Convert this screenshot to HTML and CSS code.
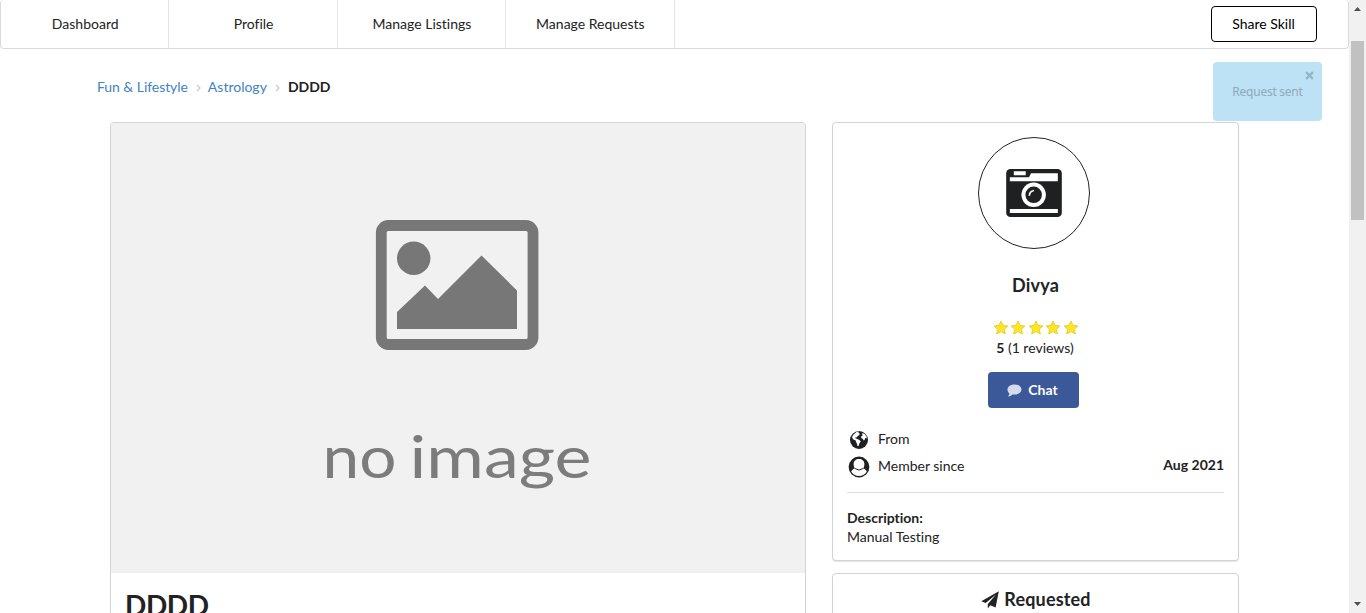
FILE: index.html
```html
<!DOCTYPE html>
<html lang="en">
<head>
<meta charset="utf-8">
<title>DDDD</title>
<link rel="stylesheet" href="styles.css">
</head>
<body>
<div class="page">
  <nav class="menu">
    <a class="item">Dashboard</a>
    <a class="item">Profile</a>
    <a class="item">Manage Listings</a>
    <a class="item">Manage Requests</a>
    <a class="share">Share Skill</a>
  </nav>
  <div class="crumbs">
    <a>Fun &amp; Lifestyle</a>
    <svg class="chev" viewBox="0 0 5 8"><path d="M1 1l3 3-3 3"/></svg>
    <a>Astrology</a>
    <svg class="chev" viewBox="0 0 5 8"><path d="M1 1l3 3-3 3"/></svg>
    <b>DDDD</b>
  </div>
  <main class="columns">
    <section class="card listing">
      <svg class="cover" viewBox="111 123 694 450">
        <rect x="381.3" y="225.5" width="151.7" height="119" rx="7" fill="none" stroke="#777" stroke-width="10.8"/>
        <circle cx="413.7" cy="258.3" r="16.7"/>
        <path d="M397 329v-17l28-26.5 13 13.500 43.500-43.500 35.500 35V329z"/>
        <text x="322.500" y="477.500" textLength="74" lengthAdjust="spacingAndGlyphs">no</text>
        <text x="409.500" y="477.500" textLength="182" lengthAdjust="spacingAndGlyphs">image</text>
      </svg>
      <h1 class="title">DDDD</h1>
    </section>
    <aside class="side">
      <section class="card profile">
        <div class="avatar">
          <svg viewBox="138 131 168 145" width="56" height="48">
            <rect x="138" y="131" width="168" height="145" rx="13" fill="#1f2021"/>
            <path d="M161 138h36v12h-36zM149 156h58l6-12h81v24H149zM149 252h145v12H149z" fill="#fff"/>
            <circle cx="221" cy="209" r="37" fill="#fff"/>
            <circle cx="221" cy="209" r="25" fill="#1f2021"/>
            <path d="M208 212q0-14 14-16" fill="none" stroke="#fff" stroke-width="5"/>
          </svg>
        </div>
        <h2 class="name">Divya</h2>
        <div class="stars">
          <svg viewBox="0 0 16 15"><path d="M8 1l2 4.400 4.900.6-3.600 3.300 1 4.700L8 11.600 3.700 14l1-4.700L1.100 6 6 5.400z"/></svg>
          <svg viewBox="0 0 16 15"><path d="M8 1l2 4.400 4.900.6-3.600 3.300 1 4.700L8 11.600 3.700 14l1-4.700L1.100 6 6 5.400z"/></svg>
          <svg viewBox="0 0 16 15"><path d="M8 1l2 4.400 4.900.6-3.600 3.300 1 4.700L8 11.600 3.700 14l1-4.700L1.100 6 6 5.400z"/></svg>
          <svg viewBox="0 0 16 15"><path d="M8 1l2 4.400 4.900.6-3.600 3.300 1 4.700L8 11.600 3.700 14l1-4.700L1.100 6 6 5.400z"/></svg>
          <svg viewBox="0 0 16 15"><path d="M8 1l2 4.400 4.900.6-3.600 3.300 1 4.700L8 11.600 3.700 14l1-4.700L1.100 6 6 5.400z"/></svg>
        </div>
        <div class="reviews"><b>5</b> (1 reviews)</div>
        <a class="chat">
          <svg viewBox="0 0 15 13" width="15" height="13"><path d="M7.500.5C11.600.5 14.500 2.700 14.500 5.600s-2.900 5-7 5c-.7 0-1.400-.1-2-.2C4.300 11.600 2.700 12.300 1 12.400c.8-.8 1.300-1.700 1.400-2.900C1.200 8.600.5 7.200.5 5.600.5 2.700 3.400.5 7.500.5z"/></svg>
          <span>Chat</span>
        </a>
        <div class="facts">
          <div class="fact">
            <svg viewBox="0 0 22 22" width="22" height="22"><circle cx="11" cy="11" r="9" fill="#1f2021"/><path d="M5.500 5.500l3-2.500 2.500-.4-.7 1.500 1.500.5-.5 1.500-1.500.8-1.300 1.500-1.400.2.600 1 1.600.4 2.200 1 1.200 1.400-1.400 2-.6 2.400-1.200.4-.5-2.500-1.100-2-.2-1.300L5 10.200 4 8zM14.500 4l2.500 1.200 1.600 2.500.2 1.600-1.500-.2-.8 1.800-.9.500-.8-1.700-1.500-.5-.2-1.700 1.500-1.100-.5-1z" fill="#fff"/></svg>
            <span>From</span>
          </div>
          <div class="fact">
            <svg viewBox="0 0 22 22" width="22" height="22"><circle cx="11" cy="11" r="10.400" fill="#1f2021"/><path d="M3.200 15.500c.8-1.800 2.300-2.500 3.900-2.900C6 11.400 5.600 9.800 5.600 8c0-3 2.200-5 5.400-5s5.400 2 5.400 5c0 1.800-.4 3.400-1.500 4.600 1.600.4 3.100 1.100 3.900 2.900C17.200 18.300 14.400 20 11 20s-6.200-1.700-7.800-4.500z" fill="#fff"/><path d="M7.100 12.600q3.900 2.900 7.800 0" fill="none" stroke="#1f2021"/></svg>
            <span>Member since</span><b>Aug 2021</b>
          </div>
        </div>
        <div class="description"><b>Description:</b><br>Manual Testing</div>
      </section>
      <section class="card requested">
        <svg viewBox="0 0 18 18" width="18" height="18"><path d="M17.800.3L.3 10.200l4.400 1.900L15 3.500 6.800 13v4.600l2.500-3.300 5.300 2.200z"/></svg>
        <span>Requested</span>
      </section>
    </aside>
  </main>
</div>
<div class="scrollbar">
  <svg viewBox="0 0 7 4"><path d="M0 4l3.500-4L7 4z"/></svg>
  <div class="thumb"></div>
  <svg viewBox="0 0 7 4"><path d="M0 0h7L3.500 4z"/></svg>
</div>
<div class="toast"><svg viewBox="0 0 8 8"><path d="M1 1l6 6M7 1L1 7"/></svg><span>Request sent</span></div>
</body>
</html>
```
FILE: styles.css
```css
* { box-sizing: border-box; }
body {
  margin: 0;
  height: 613px;
  overflow: hidden;
  display: flex;
  background: #fff;
  color: #212223;
  font: 14px/20px Lato, sans-serif;
  font-variant-ligatures: none;
}
svg { display: block; flex: none; }
.page { width: 1349px; height: 613px; overflow: hidden; }
.menu {
  display: flex;
  height: 49px;
  border: 1px solid #d9dadb;
  border-top: 0;
  border-radius: 4px;
}
.item {
  width: 168.400px;
  padding-left: 1px;
  border-right: 1px solid #e3e4e4;
  text-align: center;
  line-height: 48px;
}
.share {
  margin: 6px 31px 0 auto;
  width: 106px;
  height: 36px;
  padding-right: 1px;
  border: 1px solid #000;
  border-radius: 4px;
  color: #000;
  text-align: center;
  line-height: 34px;
}
.crumbs {
  display: flex;
  align-items: center;
  padding: 28px 0 0 97px;
  height: 48px;
}
.crumbs a { color: #4183c4; }
.crumbs a:first-child { letter-spacing: -0.06px; }
.crumbs b { margin-left: 1px; }
.chev { width: 5px; height: 8px; margin: 2px 7px 0 8px; fill: none; stroke: #c9c9c9; stroke-width: 1.2; }
.columns { display: flex; gap: 26px; padding: 25px 0 0 110px; }
.card {
  background: #fff;
  border: 1px solid #d4d4d5;
  border-radius: 4px;
  box-shadow: 0 1px 1px #e4e4e5;
}
.listing { width: 696px; height: 560px; overflow: hidden; }
.cover { width: 694px; height: 450px; background: #f1f1f1; fill: #777; }
.cover text { font: 59px Lato, sans-serif; fill: #7c7c7c; }
.title { margin: 14px 14px 0; font-size: 28px; line-height: 36px; font-weight: 700; letter-spacing: -0.400px; }
.side { width: 407px; display: flex; flex-direction: column; gap: 12px; }
.profile {
  height: 439px;
  padding: 14px 14px 0;
  display: flex;
  flex-direction: column;
  align-items: center;
}
.avatar {
  width: 112px;
  height: 112px;
  margin-right: 4px;
  border: 1px solid #222;
  border-radius: 50%;
  display: grid;
  place-items: center;
}
.name { margin: 24px 0 0; font-size: 18px; line-height: 24px; letter-spacing: 0.2px; }
.stars { display: flex; gap: 1.500px; margin-top: 23px; }
.stars svg { width: 16px; height: 15px; fill: #ffe623; stroke: #e6d033; stroke-width: 1; stroke-linejoin: round; }
.reviews { margin-top: 3px; padding-right: 1px; line-height: 20px; }
.chat {
  display: flex;
  align-items: center;
  justify-content: center;
  gap: 6px;
  width: 91px;
  height: 36px;
  margin: 14px 4px 0 0;
  padding-right: 2px;
  border-radius: 4px;
  background: #3b5998;
  color: #fff;
  font-weight: 700;
}
.chat svg { fill: #d5dbea; }
.facts {
  width: 100%;
  height: 85px;
  padding-top: 21px;
  border-bottom: 1px solid #dcdddd;
}
.fact { display: flex; height: 27px; padding-left: 1px; }
.fact span { margin-left: 8px; }
.fact b { margin-left: auto; margin-top: -1px; }
.description { width: 100%; margin-top: 15px; line-height: 19px; }
.requested {
  height: 60px;
  padding: 13px 0 0 1px;
  display: flex;
  justify-content: center;
  gap: 5px;
  font-size: 18px;
  line-height: 24px;
  font-weight: 700;
}
.requested span { letter-spacing: 0.150px; }
.requested svg { margin-top: 4px; fill: #212223; }
.scrollbar {
  width: 17px;
  height: 613px;
  padding: 7px 0;
  background: #f1f1f1;
  display: flex;
  flex-direction: column;
  align-items: center;
}
.scrollbar svg { width: 7px; height: 4px; fill: #505050; }
.scrollbar svg:last-child { margin-top: auto; }
.thumb { width: 13px; height: 179px; margin-top: 30px; background: #c1c1c1; }
.toast {
  position: absolute;
  left: 1213px;
  top: 62px;
  width: 109px;
  height: 59px;
  padding-top: 20px;
  border-radius: 4px;
  background: #bde1f5;
  color: #8fa9bb;
  text-align: center;
  font: 12px/20px "Noto Sans", "Open Sans", sans-serif;
  letter-spacing: -0.250px;
}
.toast svg { position: absolute; right: 8px; top: 9px; width: 9px; height: 9px; fill: none; stroke: #94b5c9; stroke-width: 2; }
```
